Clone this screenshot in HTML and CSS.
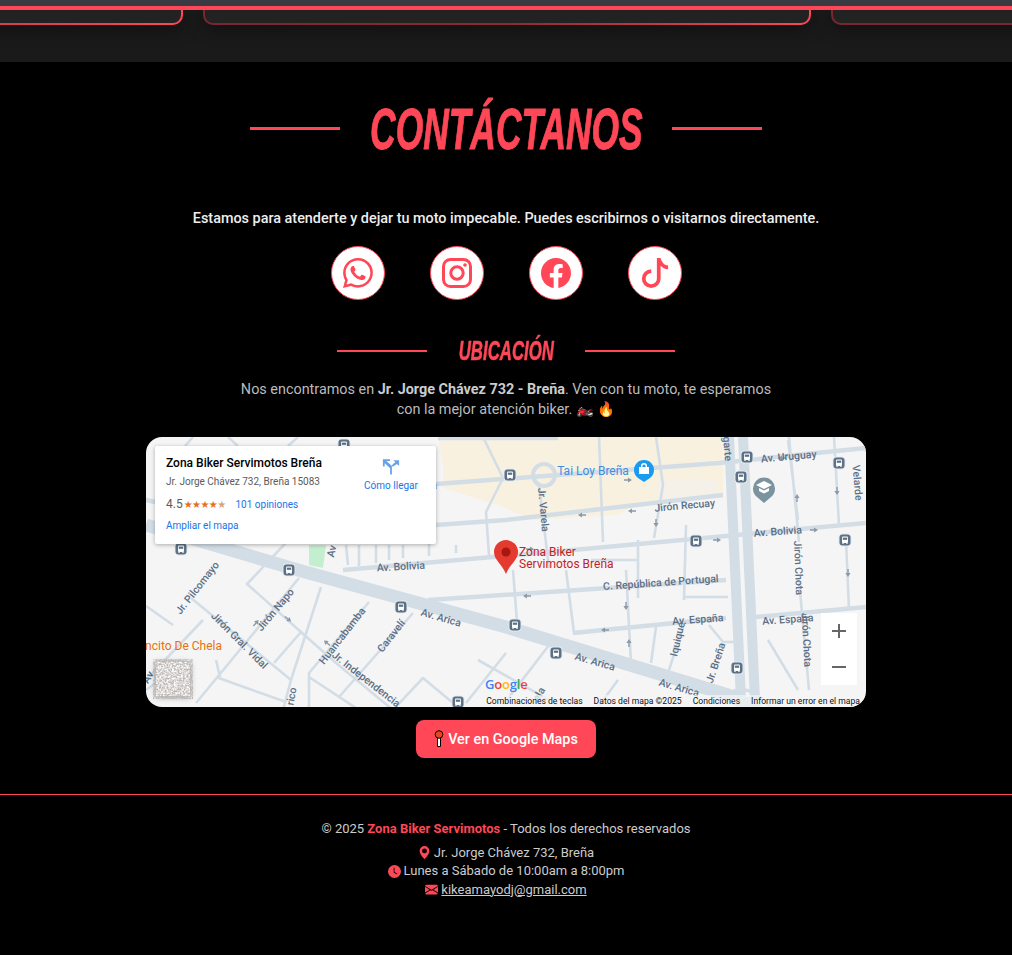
FILE: index.html
```html
<!DOCTYPE html>
<html lang="es">
<head>
<meta charset="utf-8">
<title>Zona Biker Servimotos - Contacto</title>
<link rel="stylesheet" href="styles.css">
</head>
<body>
<div class="topbar"></div>
<section class="band">
  <div class="band-cards">
    <div class="card card-left"></div>
    <div class="card card-mid"></div>
    <div class="card card-right"></div>
  </div>
</section>

<section class="contact">
  <h2 class="title title-main"><span class="rule"></span><span class="title-box"><span class="title-text">CONTÁCTANOS</span></span><span class="rule"></span></h2>
  <p class="lead">Estamos para atenderte y dejar tu moto impecable. Puedes escribirnos o visitarnos directamente.</p>
  <div class="socials">
    <a class="social"><svg viewBox="0 0 16 16"><path d="M13.601 2.326A7.854 7.854 0 0 0 7.994 0C3.627 0 .068 3.558.064 7.926c0 1.399.366 2.76 1.057 3.965L0 16l4.204-1.102a7.933 7.933 0 0 0 3.79.965h.004c4.368 0 7.926-3.558 7.93-7.93A7.898 7.898 0 0 0 13.6 2.326zM7.994 14.521a6.573 6.573 0 0 1-3.356-.92l-.24-.144-2.494.654.666-2.433-.156-.251a6.56 6.56 0 0 1-1.007-3.505c0-3.626 2.957-6.584 6.591-6.584a6.56 6.56 0 0 1 4.66 1.931 6.557 6.557 0 0 1 1.928 4.66c-.004 3.639-2.961 6.592-6.592 6.592zm3.615-4.934c-.197-.099-1.17-.578-1.353-.646-.182-.065-.315-.099-.445.099-.133.197-.513.646-.627.775-.114.133-.232.148-.43.05-.197-.1-.836-.308-1.592-.985-.59-.525-.985-1.175-1.103-1.372-.114-.198-.011-.304.088-.403.087-.088.197-.232.296-.346.1-.114.133-.198.198-.33.065-.134.034-.248-.015-.347-.05-.099-.445-1.076-.612-1.47-.16-.389-.323-.335-.445-.34-.114-.007-.247-.007-.38-.007a.729.729 0 0 0-.529.247c-.182.198-.691.677-.691 1.654 0 .977.71 1.916.81 2.049.098.133 1.394 2.132 3.383 2.992.47.205.84.326 1.129.418.475.152.904.129 1.246.08.38-.058 1.171-.48 1.338-.943.164-.464.164-.86.114-.943-.049-.084-.182-.133-.38-.232z"/></svg></a>
    <a class="social"><svg viewBox="0 0 30 30"><rect class="ig-line" x="1.5" y="1.5" width="27" height="27" rx="7"/><circle class="ig-line" cx="15" cy="15" r="6.2"/><circle cx="23" cy="7" r="1.8"/></svg></a>
    <a class="social"><svg viewBox="0 0 16 16"><path d="M16 8.049c0-4.446-3.582-8.05-8-8.05C3.58 0-.002 3.603-.002 8.05c0 4.017 2.926 7.347 6.75 7.951v-5.625h-2.03V8.05H6.75V6.275c0-2.017 1.195-3.131 3.022-3.131.876 0 1.791.157 1.791.157v1.98h-1.009c-.993 0-1.303.621-1.303 1.258v1.51h2.218l-.354 2.326H9.25V16c3.824-.604 6.75-3.934 6.75-7.951z"/></svg></a>
    <a class="social"><svg viewBox="0 0 16 16"><path d="M9 0h1.98c.144.715.54 1.617 1.235 2.512C12.895 3.389 13.797 4 15 4v2c-1.753 0-3.07-.814-4-1.829V11a5 5 0 1 1-5-5v2a3 3 0 1 0 3 3V0Z"/></svg></a>
  </div>

  <h3 class="title title-sub"><span class="rule"></span><span class="title-box"><span class="title-text">UBICACIÓN</span></span><span class="rule"></span></h3>
  <p class="intro">Nos encontramos en <strong>Jr. Jorge Chávez 732 - Breña</strong>. Ven con tu moto, te esperamos<br>con la mejor atención biker. 🏍️ 🔥</p>

  <div class="map">
    <svg class="map-canvas" viewBox="148 437 720 270" aria-hidden="true">
      <defs>
        <symbol id="bus" viewBox="0 0 14 14" overflow="visible">
          <rect x="0.5" y="0.5" width="13" height="13" rx="4" fill="#e6eaee"/>
          <rect x="1.5" y="1.5" width="11" height="11" rx="3" fill="#5b7186"/>
          <rect x="4" y="3.6" width="6" height="6.4" rx="1" fill="#fff"/>
          <rect x="4.8" y="4.6" width="4.4" height="2.2" fill="#5b7186"/>
          <rect x="4.4" y="10" width="1.2" height="1" fill="#fff"/>
          <rect x="8.4" y="10" width="1.2" height="1" fill="#fff"/>
        </symbol>
        <symbol id="arr" viewBox="0 0 8 6" overflow="visible">
          <path d="M0 3L4 0.4V2.3H8V3.7H4V5.6Z" fill="#8b99a8"/>
        </symbol>
        <filter id="sat"><feTurbulence type="fractalNoise" baseFrequency="0.55" numOctaves="3" seed="4"/><feColorMatrix values="0 0 0 0 0.48  0 0 0 0 0.45  0 0 0 0 0.43  0 0 0 2.2 -0.6"/></filter>
      </defs>
      <rect class="m-bg" x="148" y="437" width="720" height="270"/>
      <path class="m-zone" d="M440 437H725V495L640 503L620 515L535 520L500 505L445 488V465Z"/>
      <path class="m-zone2" d="M660 480H720V495L660 502Z"/>
      <path class="m-park" d="M311 545H328L325 568L311 565Z"/>

      <path class="r-s" d="M193 598L293 680M248 583L303 632L338 663L395 710M301 578L198 703M323 587L293 680L285 710M218 677L288 702M303 632L276 663M371 602L311 673V710M311 677L361 710M415 613L341 697M395 710L425 678L455 703M508 653L468 703M250 583L300 530M148 606L175 625M148 690L178 668M222 677L218 660M205 620L148 680M348 545L350 565M361 545V566M378 545V563M391 545V560M405 545V558M431 544V556M458 545V553M485 437L505 478L488 512L491 555M601 437L605 542M658 437L665 485L656 538M791 437L801 542M836 437L841 525M801 580L811 690M541 485L551 568M515 570L519 622M568 570L576 633M628 570L633 663M688 525L686 600M685 627L671 670M711 625L725 642H736M848 540L851 610M658 627L653 663M685 597H730M640 540V598M593 560H640M480 660L560 705M555 640L505 705M620 680L600 707M800 690L770 640M790 440L800 520M300 437L290 446M195 437L187 446M230 437L240 446"/>
      <path class="r-m" d="M438 484L721 463L868 448M438 525L508 520L725 495M345 570L575 550L868 523M430 600L728 580M575 633L728 618M758 617L868 607M148 500L157 502M440 438H560"/>
      <circle class="r-c" cx="546" cy="475" r="11"/>
      <path class="r-l" d="M148 525L300 570L508 627L730 695L760 710"/>
      <path class="r-b" d="M731 437L743 700M745 437L757 700"/>
      <path class="r-lw" d="M730 693Q752 682 772 707"/>
      <path class="m-green" d="M738 707Q752 688 764 707"/>

      <g>
        <use href="#arr" x="580" y="512" width="8" height="6"/><use href="#arr" x="630" y="508" width="8" height="6"/>
        <use href="#arr" x="528" y="546" width="8" height="6" transform="rotate(180 532 549)"/><use href="#arr" x="715" y="537" width="8" height="6" transform="rotate(180 719 540)"/>
        <use href="#arr" x="812" y="527" width="8" height="6" transform="rotate(180 816 530)"/><use href="#arr" x="525" y="593" width="8" height="6"/>
        <use href="#arr" x="603" y="627" width="8" height="6"/><use href="#arr" x="624" y="603" width="8" height="6" transform="rotate(270 628 606)"/>
        <use href="#arr" x="627" y="640" width="8" height="6" transform="rotate(90 631 643)"/><use href="#arr" x="626" y="477" width="8" height="6" transform="rotate(180 630 480)"/>
        <use href="#arr" x="780" y="455" width="8" height="6"/><use href="#arr" x="654" y="520" width="8" height="6" transform="rotate(270 658 523)"/>
        <use href="#arr" x="254" y="620" width="8" height="6" transform="rotate(130 258 623)"/><use href="#arr" x="286" y="616" width="8" height="6" transform="rotate(220 290 619)"/>
        <use href="#arr" x="325" y="640" width="8" height="6" transform="rotate(40 329 643)"/><use href="#arr" x="795" y="495" width="8" height="6" transform="rotate(90 799 498)"/>
        <use href="#arr" x="835" y="488" width="8" height="6" transform="rotate(270 839 491)"/><use href="#arr" x="846" y="570" width="8" height="6" transform="rotate(270 850 573)"/>
      </g>

      <g>
        <use href="#bus" x="176" y="542" width="14" height="14"/><use href="#bus" x="284" y="563" width="14" height="14"/>
        <use href="#bus" x="396" y="600" width="14" height="14"/><use href="#bus" x="510" y="618" width="14" height="14"/>
        <use href="#bus" x="551" y="646" width="14" height="14"/><use href="#bus" x="691" y="534" width="14" height="14"/>
        <use href="#bus" x="742" y="450" width="14" height="14"/><use href="#bus" x="736" y="470" width="14" height="14"/>
        <use href="#bus" x="834" y="456" width="14" height="14"/><use href="#bus" x="840" y="533" width="14" height="14"/>
        <use href="#bus" x="505" y="468" width="14" height="14"/><use href="#bus" x="732" y="661" width="14" height="14"/>
        <use href="#bus" x="453" y="695" width="14" height="14"/><use href="#bus" x="339" y="438" width="14" height="14"/>
      </g>

      <g class="lab">
        <text transform="translate(791 460) rotate(-5)">Av. Uruguay</text>
        <text transform="translate(856 483) rotate(85)">Velarde</text>
        <text transform="translate(542 510) rotate(85)">Jr. Varela</text>
        <text transform="translate(687 509) rotate(-5)">Jirón Recuay</text>
        <text transform="translate(780 535) rotate(-4)">Av. Bolivia</text>
        <text transform="translate(797 568) rotate(88)">Jirón Chota</text>
        <text transform="translate(805 640) rotate(87)">Jirón Chota</text>
        <text transform="translate(403 570) rotate(-3)">Av. Bolivia</text>
        <text transform="translate(663 586) rotate(-4)">C. República de Portugal</text>
        <text transform="translate(700 623) rotate(-4)">Av. España</text>
        <text transform="translate(790 623) rotate(-4)">Av. España</text>
        <text transform="translate(683 640) rotate(-77)">Iquique</text>
        <text transform="translate(721 664) rotate(-72)">Jr. Breña</text>
        <text transform="translate(442 621) rotate(16)">Av. Arica</text>
        <text transform="translate(596 665) rotate(16)">Av. Arica</text>
        <text transform="translate(680 691) rotate(16)">Av. Arica</text>
        <text transform="translate(347 638) rotate(-52)">Huancabamba</text>
        <text transform="translate(396 638) rotate(-52)">Caravelí</text>
        <text transform="translate(280 612) rotate(-50)">Jirón Napo</text>
        <text transform="translate(202 590) rotate(-52)">Jr. Pilcomayo</text>
        <text transform="translate(239 643) rotate(45)">Jirón Gral. Vidal</text>
        <text transform="translate(366 682) rotate(38)">Jr. Independencia</text>
        <text transform="translate(297 697) rotate(-80)">rico</text>
        <text transform="translate(337 552) rotate(-77)">Av</text>
        <text x="432" y="489">ela</text>
        <text transform="translate(726 449) rotate(85)">garte</text>
        <text transform="translate(544 696) rotate(-60)">ela</text>
        <text transform="translate(153 679) rotate(-60)">Av</text>
      </g>
      <text class="lab-blue" x="595" y="475">Tai Loy Breña</text>
      <text class="lab-orange" x="224" y="650">Rincito De Chela</text>
      <text class="lab-red" x="521" y="556">Zona Biker</text>
      <text class="lab-red" x="521" y="568">Servimotos Breña</text>

      <path class="pin-blue" d="M646 482L640 478A10 10 0 1 1 652 478Z"/>
      <path class="pin-white" d="M641 467V474H651V467H649V466A3 3 0 0 0 643 466V467ZM644.4 467V466A1.6 1.6 0 0 1 647.6 466V467Z"/>
      <path class="pin-gray" d="M766 503L759 497A11 11 0 1 1 773 497Z"/>
      <path class="pin-white" d="M766 481L774 485L766 489L758 485ZM761 488V491L766 493.5L771 491V488L766 490.5Z"/>
      <path class="pin-red" d="M508 574C504 564 496 560 496 552A12 12 0 0 1 520 552C520 560 512 564 508 574Z"/>
      <circle class="pin-dark" cx="508" cy="552" r="4.5"/>

      <text class="g-logo" x="487" y="689"><tspan class="g-b">G</tspan><tspan class="g-r">o</tspan><tspan class="g-y">o</tspan><tspan class="g-b">g</tspan><tspan class="g-g">l</tspan><tspan class="g-r">e</tspan></text>
      <rect class="sat-base" x="158" y="662" width="34" height="34"/>
      <rect class="sat-noise" x="159" y="663" width="32" height="32" filter="url(#sat)"/>
    </svg>

    <div class="map-card">
      <div class="map-card-main">
        <div class="place-name">Zona Biker Servimotos Breña</div>
        <div class="place-addr">Jr. Jorge Chávez 732, Breña 15083</div>
        <div class="place-rate"><span class="score">4.5</span><span class="stars">★★★★<span class="half">★</span></span><a class="place-link reviews">101 opiniones</a></div>
        <a class="place-link">Ampliar el mapa</a>
      </div>
      <a class="directions"><svg viewBox="0 0 20 18"><path d="M9 18V11L3 5.5V9H1V1H9V3H5L11 8.5V18ZM12 9.4L10.7 8L14.8 4L12.5 2H19V8.5L16.5 6.2Z"/></svg><span>Cómo llegar</span></a>
    </div>
    <div class="zoom-ctl">
      <svg viewBox="0 0 36 36"><path d="M18 11V25M11 18H25"/></svg>
      <svg viewBox="0 0 36 36"><path d="M11 18H25"/></svg>
    </div>
    <div class="attrib"><span>Combinaciones de teclas</span><span>Datos del mapa ©2025</span><span>Condiciones</span><span>Informar un error en el mapa</span></div>
  </div>

  <a class="maps-btn"><svg viewBox="0 0 10 18"><path class="pb-stem" d="M3.5 7H6.5V16.5H3.5Z"/><circle class="pb-head" cx="5" cy="4.5" r="3.8"/></svg>Ver en Google Maps</a>
</section>

<footer class="footer">
  <p class="copy">© 2025 <strong>Zona Biker Servimotos</strong> - Todos los derechos reservados</p>
  <p class="f-row f-first"><svg viewBox="0 0 16 16"><path d="M8 16s6-5.686 6-10A6 6 0 0 0 2 6c0 4.314 6 10 6 10zm0-7a3 3 0 1 1 0-6 3 3 0 0 1 0 6z"/></svg>Jr. Jorge Chávez 732, Breña</p>
  <p class="f-row"><svg viewBox="0 0 16 16"><path d="M16 8A8 8 0 1 1 0 8a8 8 0 0 1 16 0zM8 3.5a.5.5 0 0 0-1 0V9a.5.5 0 0 0 .252.434l3.5 2a.5.5 0 0 0 .496-.868L8 8.71V3.5z"/></svg>Lunes a Sábado de 10:00am a 8:00pm</p>
  <p class="f-row"><svg viewBox="0 0 16 16"><path d="M.05 3.555A2 2 0 0 1 2 2h12a2 2 0 0 1 1.95 1.555L8 8.414.05 3.555zM0 4.697v7.104l5.803-3.558L0 4.697zM6.761 8.83l-6.57 4.027A2 2 0 0 0 2 14h12a2 2 0 0 0 1.808-1.144l-6.57-4.027L8 9.586l-1.239-.757zm3.436-.586L16 11.801V4.697l-5.803 3.546z"/></svg><a class="mail">kikeamayodj@gmail.com</a></p>
</footer>
</body>
</html>
```
FILE: styles.css
```css
* { box-sizing: border-box; }
html, body { margin: 0; padding: 0; background: #000; }
body { font-family: Roboto, "Liberation Sans", sans-serif; color: #ccc; min-height: 955px; overflow-x: hidden; }
p, h2, h3 { margin: 0; }

.topbar { height: 6px; background: #3a3a42; }
.band { height: 56px; background: #1a1a1a; border-top: 4px solid #ff4757; overflow: hidden; }
.band-cards { display: flex; justify-content: center; gap: 20px; height: 15px; margin-left: 2px; }
.card { flex: 0 0 608px; height: 15px; border: solid transparent; border-width: 0 2px 2px; border-radius: 0 0 10px 10px; box-shadow: 0 4px 18px rgba(0, 0, 0, .45); }
.card-left { background: linear-gradient(#222, #222) padding-box, linear-gradient(90deg, #7a2530, #ff4757) border-box; }
.card-mid { background: linear-gradient(#222, #222) padding-box, linear-gradient(90deg, #7a2530 0%, #8a2a35 50%, #ff4757 100%) border-box; }
.card-right { background: linear-gradient(#222, #222) padding-box, linear-gradient(90deg, #7a2530, #7a2530) border-box; }

.contact { display: flex; flex-direction: column; align-items: center; padding-top: 36px; }
.title { display: flex; align-items: center; justify-content: center; color: #ff4757; }
.title-main { height: 60px; gap: 27px; }
.title-sub { height: 40px; gap: 28px; margin-top: 31px; }
.title .rule { flex: none; width: 90px; height: 3px; background: #ff4757; }
.title-sub .rule { height: 2px; }
.title-box { display: flex; justify-content: center; }
.title-text { flex: none; white-space: nowrap; font-family: "Liberation Sans", sans-serif; font-weight: 700; font-style: italic; -webkit-text-stroke: 1px #ff4757; }
.title-main .title-box { width: 278px; }
.title-main .title-text { font-size: 58px; transform: scaleX(.61); }
.title-sub .title-box { width: 102px; }
.title-sub .title-text { font-size: 28px; transform: scaleX(.6); -webkit-text-stroke: .6px #ff4757; }

.lead { margin-top: 51px; font-size: 14.4px; line-height: 20px; font-weight: 500; color: #eee; text-align: center; }
.socials { display: flex; gap: 45px; margin-top: 17px; }
.social { display: flex; align-items: center; justify-content: center; width: 54px; height: 54px; background: #fff; border: 1px solid #ff4757; border-radius: 50%; }
.social svg { width: 30px; height: 30px; fill: #ff4757; }
.ig-line { fill: none; stroke: #ff4757; stroke-width: 3; }

.intro { margin-top: 9px; font-size: 14.4px; line-height: 20px; color: #bbb; text-align: center; }
.intro strong { font-weight: 700; color: #ccc; }

.map { position: relative; width: 720px; height: 270px; margin-top: 17px; border-radius: 16px; overflow: hidden; font-family: Roboto, "Liberation Sans", sans-serif; }
.map-canvas { display: block; width: 720px; height: 270px; }
.m-bg { fill: #f5f5f5; }
.m-zone { fill: #f8f1df; }
.m-zone2 { fill: #f5f1e8; }
.m-park { fill: #c4eed0; }
.m-green { fill: none; stroke: #a5dcb8; stroke-width: 1; }
.r-s, .r-m, .r-l, .r-b, .r-lw, .r-c { fill: none; stroke: #d3dde6; stroke-linejoin: round; }
.r-s { stroke-width: 2.6; }
.r-m { stroke-width: 4.5; }
.r-c { stroke-width: 4; }
.r-l { stroke-width: 13; }
.r-b { stroke-width: 10; }
.r-lw { stroke-width: 3; }
.lab text { font-size: 10.5px; font-weight: 500; fill: #5c6f85; text-anchor: middle; }
.lab-blue { font-size: 12px; fill: #3f8ee0; text-anchor: middle; }
.lab-orange { font-size: 12px; fill: #e8710a; text-anchor: end; }
.lab-red { font-size: 12px; fill: #c5221f; }
.pin-blue { fill: #1a9af0; }
.pin-gray { fill: #7b929f; }
.pin-white { fill: #fff; fill-rule: evenodd; }
.pin-red { fill: #e53a30; }
.pin-dark { fill: #a8170f; }
.g-logo { font-family: "Open Sans", sans-serif; font-size: 13px; font-weight: 600; letter-spacing: -.2px; }
.g-b { fill: #4285f4; } .g-r { fill: #ea4335; } .g-y { fill: #fbbc05; } .g-g { fill: #34a853; }
.sat-base { fill: #fff; filter: drop-shadow(0 1px 3px rgba(0, 0, 0, .4)); }
.sat-noise { fill: #7a7370; }

.map-card { position: absolute; left: 9px; top: 9px; width: 281px; height: 98px; padding: 9px 11px; display: flex; background: #fff; border-radius: 2px; box-shadow: 0 1px 4px rgba(0, 0, 0, .3); color: #5b5b5b; font-size: 10px; }
.map-card-main { flex: 1; }
.place-name { font-size: 12px; font-weight: 500; line-height: 16px; color: #000; }
.place-addr { margin-top: 4px; line-height: 13px; }
.place-rate { display: flex; align-items: center; margin-top: 9px; height: 14px; }
.score { font-size: 12px; margin-right: 1px; }
.stars { font-size: 10px; color: #e7711b; letter-spacing: -.6px; font-family: "DejaVu Sans", sans-serif; }
.half { color: #d9a27b; }
.place-link { display: block; color: #1a73e8; line-height: 13px; }
.place-rate + .place-link { margin-top: 8px; }
.reviews { margin-left: 10px; }
.directions { flex: none; width: 72px; display: flex; flex-direction: column; align-items: center; margin-right: -2px; color: #1a73e8; }
.directions svg { width: 18px; height: 17px; margin-top: 3px; fill: #6aa2e8; }
.directions span { margin-top: 4px; line-height: 13px; }
.zoom-ctl { position: absolute; right: 9px; top: 176px; width: 36px; height: 72px; background: #fff; display: flex; flex-direction: column; }
.zoom-ctl svg { width: 36px; height: 36px; fill: none; stroke: #666; stroke-width: 2; }
.attrib { position: absolute; right: 0; bottom: 0; display: flex; gap: 11px; height: 12px; padding: 0 6px 0 5px; background: rgba(245, 245, 245, .7); font-size: 8.6px; line-height: 12px; color: #111; white-space: nowrap; }

.maps-btn { display: flex; align-items: center; justify-content: center; gap: 4px; width: 180px; height: 38px; margin-top: 13px; border-radius: 8px; background: #ff4757; color: #fff; font-size: 14.4px; font-weight: 500; }
.maps-btn svg { width: 10px; height: 18px; }
.pb-stem { fill: #fff; stroke: #000; stroke-width: 1; }
.pb-head { fill: #e8471c; stroke: #000; stroke-width: 1; }

.footer { margin-top: 36px; padding: 25px 0 40px; border-top: 1px solid #ff4757; text-align: center; font-size: 13px; line-height: 18.5px; color: #ccc; }
.copy strong { color: #ff4757; font-weight: 700; }
.f-first { margin-top: 5px; }
.f-row { display: flex; align-items: center; justify-content: center; gap: 3px; }
.f-row svg { width: 13px; height: 13px; fill: #ff4757; }
.mail { color: #ccc; text-decoration: underline; }
```
